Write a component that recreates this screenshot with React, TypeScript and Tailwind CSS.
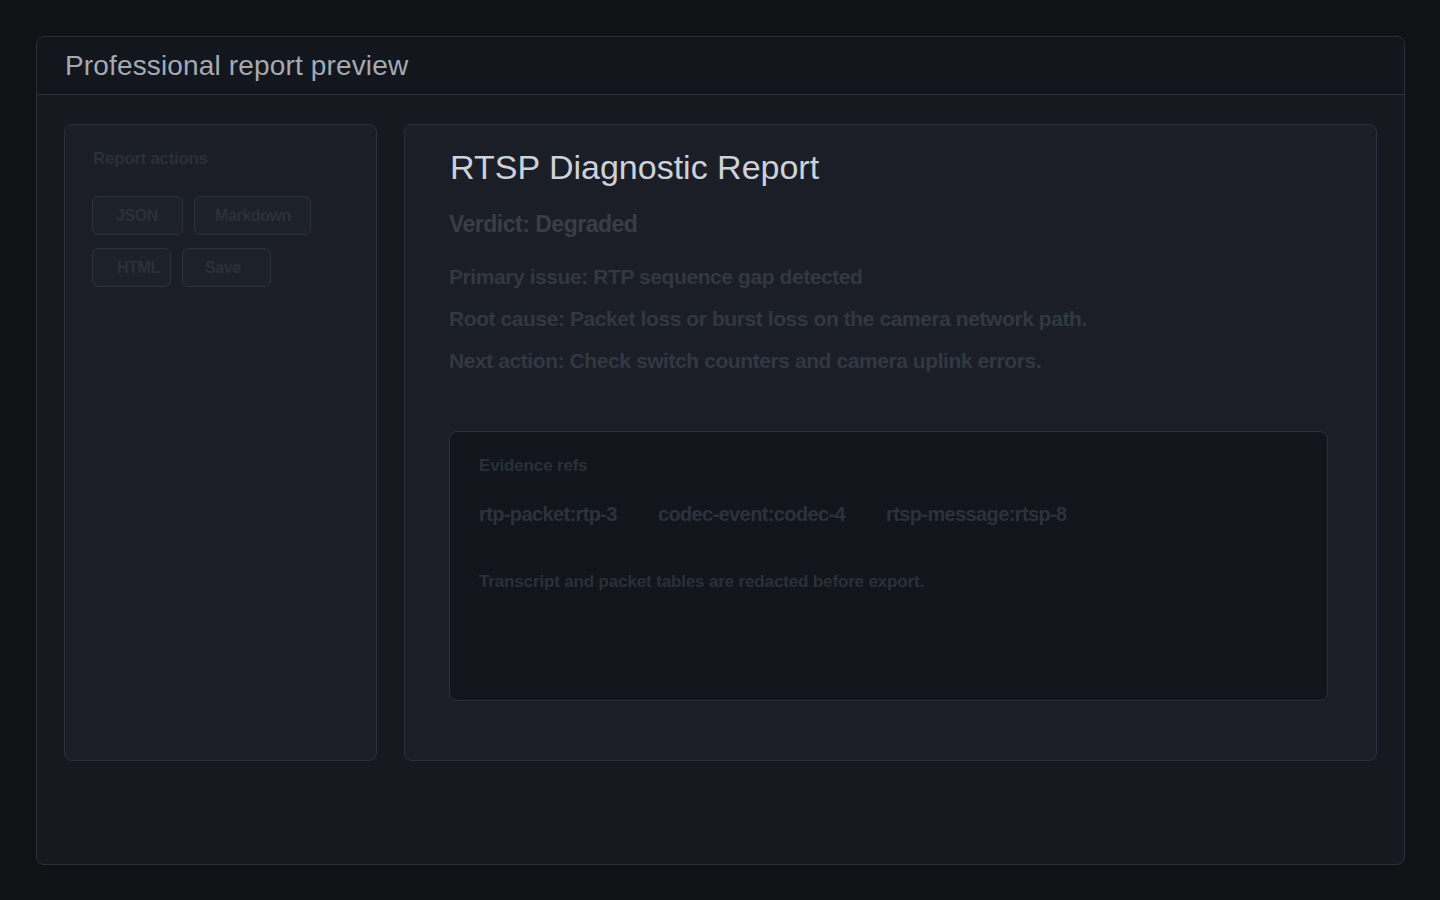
const font = { fontFamily: '"Liberation Sans", Arial, sans-serif' };

const actions = [
  { label: "JSON", cls: "w-[91px] pl-[23px]" },
  { label: "Markdown", cls: "w-[117px] pl-[20px]" },
  { label: "HTML", cls: "w-[79px] pl-[24px]" },
  { label: "Save", cls: "w-[89px] pl-[22px]" },
];

const findings = [
  "Primary issue: RTP sequence gap detected",
  "Root cause: Packet loss or burst loss on the camera network path.",
  "Next action: Check switch counters and camera uplink errors.",
];

const refs = ["rtp-packet:rtp-3", "codec-event:codec-4", "rtsp-message:rtsp-8"];

export default function App() {
  return (
    <div className="flex h-screen w-full bg-[#111216] pt-9 pr-[35px] pb-[35px] pl-9" style={font}>
      <section className="flex flex-1 flex-col overflow-hidden rounded-lg border border-[#2a313c] bg-[#161920]">
        <header className="flex h-[58px] shrink-0 items-center border-b border-[#2a313c] bg-[#13161c] px-7">
          <h1 className="text-[28px] font-light tracking-[0.15px] text-[#a3aab5]">Professional report preview</h1>
        </header>

        <div className="flex gap-[27px] px-[27px] pt-[29px]">
          <aside className="h-[637px] w-[313px] shrink-0 rounded-lg border border-[#2a313c] bg-[#1b1e26] px-[28px] pt-[22px]">
            <h2 className="text-[17px] leading-[24px] font-bold tracking-[-0.3px] text-[#2a303a]">Report actions</h2>
            <div className="mt-[25px] -ml-px flex w-[230px] flex-wrap gap-x-[11px] gap-y-[13px]">
              {actions.map((a) => (
                <button
                  key={a.label}
                  className={`h-[39px] ${a.cls} rounded-md border border-[#2d333e] bg-[#1d2129] text-left text-base font-bold tracking-[-0.4px] text-[#2b313a]`}
                >
                  {a.label}
                </button>
              ))}
            </div>
          </aside>

          <main className="h-[637px] flex-1 rounded-lg border border-[#2a313c] bg-[#1b1e26] pt-[22px] pr-[48px] pl-[44px]">
            <h2 className="pl-px text-[34px] leading-[40px] font-light text-[#cdd2da]">RTSP Diagnostic Report</h2>
            <p className="mt-[22px] text-[23px] leading-[30px] font-bold tracking-[-0.5px] text-[#3a3d44]">Verdict: Degraded</p>
            <div className="mt-[17px]">
              {findings.map((f) => (
                <p key={f} className="text-[21px] leading-[42px] font-bold tracking-[-0.42px] text-[#323842]">
                  {f}
                </p>
              ))}
            </div>

            <div className="mt-[49px] h-[270px] rounded-lg border border-[#2a313c] bg-[#12151b] px-[29px] pt-[22px]">
              <h3 className="text-[17px] leading-[24px] font-bold tracking-[-0.15px] text-[#2a3039]">Evidence refs</h3>
              <div className="mt-[22px] flex gap-[41px]">
                {refs.map((r) => (
                  <span key={r} className="text-[20px] leading-[28px] font-bold tracking-[-0.62px] text-[#2c323c]">
                    {r}
                  </span>
                ))}
              </div>
              <p className="mt-[42px] text-[17px] leading-[24px] font-bold tracking-[-0.15px] text-[#2a3039]">
                Transcript and packet tables are redacted before export.
              </p>
            </div>
          </main>
        </div>
      </section>
    </div>
  );
}
